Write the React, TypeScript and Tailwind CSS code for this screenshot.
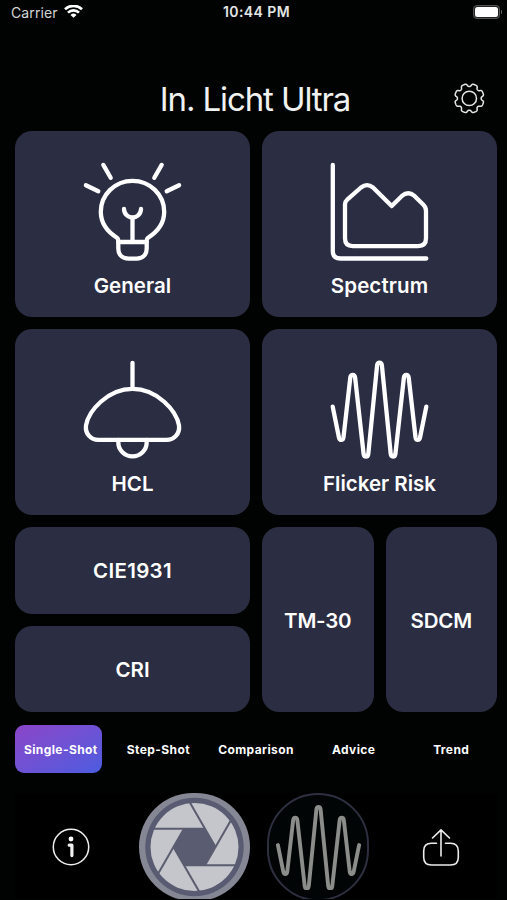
import { ReactNode } from "react";

const WAVE =
  "M2.2 46.2 L8.4 76.8 Q9 79.5 10.8 79.5 Q12.6 79.5 13 76.8 L19.8 17.2 Q20.2 14.5 22.2 14.5 Q24.2 14.5 24.6 17.2 L33.1 93.5 Q33.5 96.2 35.5 96.2 Q37.5 96.2 37.8 93.5 L46.6 5 Q47 2.3 49 2.3 Q51 2.3 51.4 5 L60.2 93.5 Q60.5 96.2 62.5 96.2 Q64.5 96.2 64.9 93.5 L73.4 17.2 Q73.8 14.5 75.8 14.5 Q77.8 14.5 78.2 17.2 L85 76.8 Q85.4 79.5 87.2 79.5 Q89 79.5 89.6 76.8 L95.8 46.2";

function TileIcon({ children }: { children: ReactNode }) {
  return (
    <svg
      viewBox="0.5 0 98 98"
      className="h-[98px] w-[98px] overflow-visible"
      fill="none"
      stroke="currentColor"
      strokeWidth="4.3"
      strokeLinecap="round"
      strokeLinejoin="round"
    >
      {children}
    </svg>
  );
}

const tiles = [
  {
    label: "General",
    tracking: "tracking-[0.05px]",
    icon: (
      <TileIcon>
        <path d="M19.8 2.9l7.4 12.9M78.2 2.9l-7.4 12.9M2.4 23.2l12.4 6M95.6 23.2l-12.4 6" />
        <path d="M34.8 80v-1.6c0-1.2-.4-1.9-1.4-2.7C22 68.5 17.3 60.500 17.300 49.800a31.700 31 0 0 1 63.400 0C80.700 60.500 76 68.500 64.600 75.700c-1 .8-1.400 1.500-1.400 2.700v1.600z" />
        <path d="M34.8 80v6.6c0 6 4 10 10 10h8.4c6 0 10-4 10-10V80M49 80V56M40.5 47a8.5 8.5 0 0 0 17 0" />
      </TileIcon>
    ),
  },
  {
    label: "Spectrum",
    tracking: "tracking-[0.1px]",
    icon: (
      <TileIcon>
        <path d="M2.3 2.9v86.1q0 7.5 7.5 7.5h86" />
        <path d="M14.5 42.3v34q0 7.8 7.8 7.8h65.4q7.8 0 7.8-7.8V48.8q0-3.5-2.6-6L84 33.9q-6.3-5.2-12.6 0L61.2 44.1 42.5 25.5q-6-4.8-12 0L17 37.3q-2.5 2.2-2.5 5z" />
      </TileIcon>
    ),
  },
  {
    label: "HCL",
    tracking: "tracking-[0px]",
    icon: (
      <TileIcon>
        <path d="M49 2.8v26M15 79.9h68c8 0 13.5-6.5 12.5-14.5C93 51 74 28.9 49 28.9S5 51 2.5 65.4C1.5 73.4 7 79.9 15 79.9z" />
        <path d="M34.8 79.9v2.3a14.2 14.2 0 0 0 28.4 0v-2.3" />
      </TileIcon>
    ),
  },
  {
    label: "Flicker Risk",
    tracking: "tracking-[0px]",
    icon: (
      <TileIcon>
        <path d={WAVE} transform="translate(0 .4)" />
      </TileIcon>
    ),
  },
];

const modes = ["Single-Shot", "Step-Shot", "Comparison", "Advice", "Trend"];

function StatusBar() {
  return (
    <div className="grid h-6 grid-cols-3 items-center pl-[11px] pr-[5px]">
      <div className="flex items-center gap-[6px] text-[14px] tracking-[0.1px] text-[#d4d6d5]">
        Carrier
        <svg viewBox="0 0.6 19 14" className="h-[14px] w-[19px]" fill="none" stroke="#fff" strokeWidth="2.7">
          <path d="M1 4.9a12.2 12.2 0 0 1 17 0M4 8.2a7.8 7.8 0 0 1 11 0" />
          <path d="M9.5 13.4L6.5 10.6a4.3 4.3 0 0 1 6 0z" fill="#fff" stroke="none" />
        </svg>
      </div>
      <div className="-mt-px text-center text-[14px] font-semibold tracking-[0.4px] text-[#e4e6e5]">10:44 PM</div>
      <div className="flex items-center justify-end gap-px">
        <div className="h-[14px] w-[27px] rounded-[4px] border border-[#555] bg-[#222] p-px">
          <div className="h-full rounded-[2.5px] bg-white" />
        </div>
        <div className="h-1 w-[1.5px] rounded-r bg-[#666]" />
      </div>
    </div>
  );
}

// Eight flat teeth with narrower rounded notches between them
function gearPath() {
  const pts: string[] = [];
  for (let i = 0; i < 240; i++) {
    const a = (i / 240) * Math.PI * 2;
    const r = 13.2 - 1.5 * Math.tanh(2.2 * (Math.cos(8 * a) - 0.35));
    pts.push(`${(16 + r * Math.sin(a)).toFixed(2)} ${(16 - r * Math.cos(a)).toFixed(2)}`);
  }
  return `M${pts.join("L")}Z`;
}

function Aperture() {
  return (
    <svg viewBox="-55.5 -54 111 108" className="h-[108px] w-[111px] shrink-0">
      <rect x="-55.5" y="-54" width="111" height="108" rx="54" fill="#858894" />
      <circle r="49.2" fill="#585b71" />
      <circle r="44" fill="#c5c6cb" />
      <path d="M21 0L10.5-18.2h-21L-21 0l10.5 18.2h21z" fill="#5a5c72" />
      {[0, 60, 120, 180, 240, 300].map((deg) => (
        <path key={deg} d="M10.5-18.2H-40.5" transform={`rotate(${deg})`} stroke="#5a5c70" strokeWidth="2" />
      ))}
    </svg>
  );
}

export default function App() {
  return (
    <div className="flex h-[900px] w-[507px] flex-col overflow-hidden bg-[#010303] font-['Inter','Liberation_Sans',sans-serif] text-white">
      <StatusBar />

      <header className="mt-[50px] grid h-[50px] grid-cols-[1fr_auto_1fr] items-center pl-[24px] pr-[21px]">
        <h1 className="col-start-2 text-[33px] leading-none tracking-[-1.1px] text-[#f0f1f1]">In. Licht Ultra</h1>
        <svg viewBox="0.7 0.6 32 32" className="h-8 w-8 justify-self-end" fill="none" stroke="#e6e6e6" strokeWidth="1.5">
          <path d={gearPath()} strokeLinejoin="round" />
          <circle cx="16" cy="16" r="7.2" />
        </svg>
      </header>

      <main className="mt-[7px] flex flex-col gap-3 pl-[15px] pr-[10px]">
        <div className="grid grid-cols-2 gap-3">
          {tiles.map((tile) => (
            <div key={tile.label} className="flex h-[186px] flex-col items-center rounded-[17px] bg-[#2b2d42] pt-[31px]">
              {tile.icon}
              <span className={`mt-[12px] text-[20.5px] font-semibold leading-[27px] ${tile.tracking}`}>{tile.label}</span>
            </div>
          ))}
        </div>
        <div className="grid h-[185px] grid-cols-2 gap-3 text-[20.5px] font-semibold">
          <div className="grid grid-rows-2 gap-3">
            <div className="flex items-center justify-center rounded-[17px] bg-[#2b2d42] pt-[2px] tracking-[0.3px]">CIE1931</div>
            <div className="flex items-center justify-center rounded-[17px] bg-[#2b2d42] pt-[3px]">CRI</div>
          </div>
          <div className="grid grid-cols-2 gap-3">
            <div className="flex items-center justify-center rounded-[17px] bg-[#2b2d42] pt-[3px] tracking-[-0.2px]">TM-30</div>
            <div className="flex items-center justify-center rounded-[17px] bg-[#2b2d42] pt-[3px] tracking-[-0.2px]">SDCM</div>
          </div>
        </div>
      </main>

      <nav className="ml-[12px] mr-[7px] mt-[13px] grid h-[48px] grid-cols-5 text-[12px] font-bold tracking-[0.4px]">
        {modes.map((mode, i) => (
          <div key={mode} className="pl-[3px] pr-2">
            <div
              className={`flex h-full items-center justify-center whitespace-nowrap rounded-[9px] pl-[5px] pt-[2px] ${
                i === 0 ? "bg-gradient-to-br from-[#8a44c8] to-[#4a5ce0]" : ""
              }`}
            >
              {mode}
            </div>
          </div>
        ))}
      </nav>

      <footer className="ml-[15px] mr-[10px] mt-[20px] flex h-[105.5px] overflow-hidden bg-black">
        <div className="flex h-[108px] w-[124px] items-center pl-[37px]">
          <svg viewBox="-19 -19 38 38" className="h-[38px] w-[38px]" fill="none" stroke="#f0f0f0">
            <circle r="17.7" strokeWidth="1.5" />
            <circle cy="-8" r="2.4" fill="#fff" stroke="none" />
            <path d="M-1.8-1.8H.9V8.6" strokeWidth="3.2" strokeLinecap="round" strokeLinejoin="round" />
          </svg>
        </div>
        <Aperture />
        <div className="ml-[17px] flex h-[108px] w-[102px] shrink-0 items-center justify-center rounded-[51px] border-2 border-[#2e2f40] bg-[#020505]">
          <svg
            viewBox="0 0 98 98"
            className="h-[85px] w-[85px]"
            fill="none"
            stroke="#8b8d8b"
            strokeWidth="4.5"
            strokeLinecap="round"
          >
            <path d={WAVE} />
          </svg>
        </div>
        <svg
          viewBox="0 0 38 38"
          className="ml-[53px] mt-[35px] h-[38px] w-[38px]"
          fill="none"
          stroke="#ececec"
          strokeWidth="1.6"
          strokeLinecap="round"
          strokeLinejoin="round"
        >
          <path d="M14.5 15.2H9.5Q1.7 15.2 1.7 23v6.2Q1.7 37 9.5 37h19q7.8 0 7.8-7.8V23q0-7.8-7.8-7.8h-5" />
          <path d="M19 28V2M10.5 10L19 1.8 27.5 10" />
        </svg>
      </footer>
    </div>
  );
}
